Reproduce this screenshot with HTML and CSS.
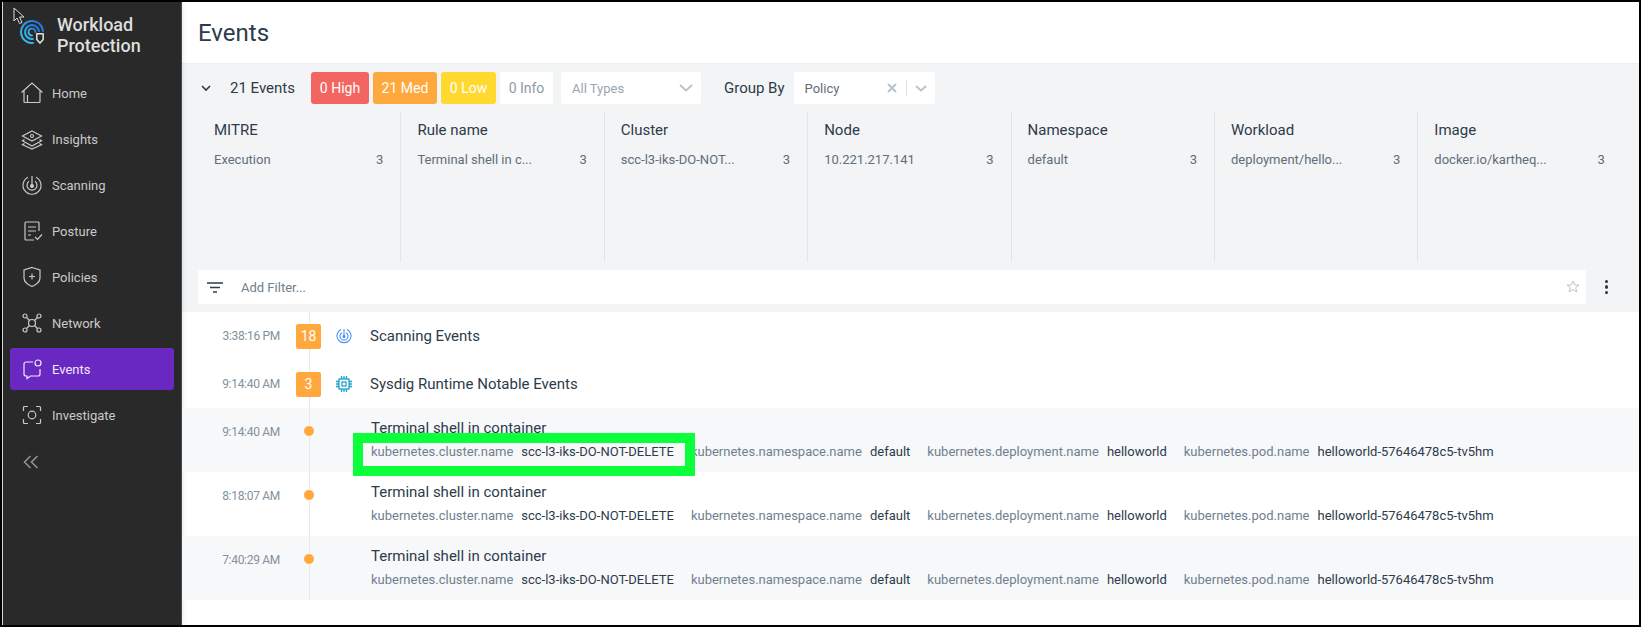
FILE: index.html
```html
<!DOCTYPE html>
<html lang="en">

<head>
    <meta charset="UTF-8">
    <meta name="viewport" content="width=device-width, initial-scale=1.0">
    <title>Events</title>
    <link rel="stylesheet" href="styles.css">
</head>

<body>
<div class="window">

    <!-- mouse pointer caught in the screenshot -->
    <svg class="cursor" width="12" height="18" viewBox="0 0 12 18">
        <path d="M1 1v13l3-3 2.500 5.500 2.500-1-2.500-5.500h4.500z" fill="#222" stroke="#ddd" stroke-width="1"/>
    </svg>

    <aside class="sidebar">
        <div class="brand">
            <svg class="brand-logo" width="24" height="24" viewBox="0 0 24 24" fill="none" stroke-linecap="round">
                <defs>
                    <linearGradient id="logoBlue" x1="0" y1="1" x2="1" y2="0">
                        <stop offset="0" stop-color="#3cc4f4"/>
                        <stop offset="1" stop-color="#1c6fd6"/>
                    </linearGradient>
                </defs>
                <path d="M13 23A11 11 0 1 1 23 11" stroke="url(#logoBlue)" stroke-width="2"/>
                <path d="M13 19A7 7 0 1 1 19 11" stroke="url(#logoBlue)" stroke-width="2"/>
                <path d="M12 15.500A3.500 3.500 0 1 1 15.500 12" stroke="url(#logoBlue)" stroke-width="2"/>
                <path d="M16.800 13.800h6.400v5.700l-3.200 3.600-3.200-3.600z" fill="#292929" stroke="#e4e4e4" stroke-width="1.500" stroke-linejoin="round"/>
            </svg>
            <div class="brand-name">Workload<br>Protection</div>
        </div>

        <nav class="nav">
            <a class="nav-item">
                <svg class="nav-icon" viewBox="0 0 22 22"><path d="M0.500 10.500L11 1l10.500 9.500M3 8.500v11a1 1 0 0 0 1 1h14a1 1 0 0 0 1-1v-11M6.500 20v-7"/></svg>
                Home
            </a>
            <a class="nav-item">
                <svg class="nav-icon" viewBox="0 0 22 22"><path d="M11 3l9.500 5-9.500 5-9.500-5zM3.500 11.500l-2 1.200 9.500 5.300 9.500-5.300-2-1.200M3.500 15.500l-2 1.200 9.500 4.300 9.500-4.300-2-1.200"/><circle cx="11" cy="8" r="1.500"/></svg>
                Insights
            </a>
            <a class="nav-item">
                <svg class="nav-icon" viewBox="0 0 22 22"><path d="M7 3.200a9 9 0 1 0 8 0M8 7.200a5 5 0 1 0 6 0M11 2v10"/><circle cx="11" cy="12" r="1.400" fill="#c9c9c9"/></svg>
                Scanning
            </a>
            <a class="nav-item">
                <svg class="nav-icon" viewBox="0 0 22 22"><path d="M18 11V3a1 1 0 0 0-1-1H5a1 1 0 0 0-1 1v16a1 1 0 0 0 1 1h8M7 7h8M7 11h8M7 15h3M14 17l2.500 2.500 4.500-5"/></svg>
                Posture
            </a>
            <a class="nav-item">
                <svg class="nav-icon" viewBox="0 0 22 22"><path d="M11 1.500l8 2.500v8c0 4-3.500 6.500-8 8.500-4.500-2-8-4.500-8-8.500V4zM11 7.500v6M8 10.500h6"/></svg>
                Policies
            </a>
            <a class="nav-item">
                <svg class="nav-icon" viewBox="0 0 22 22"><circle cx="11" cy="11" r="3.500"/><circle cx="4" cy="4" r="2"/><circle cx="18" cy="4" r="2"/><circle cx="4" cy="18" r="2"/><circle cx="18" cy="18" r="2"/><path d="M5.500 5.500l3 3M16.500 5.500l-3 3M5.500 16.500l3-3M16.500 16.500l-3-3"/></svg>
                Network
            </a>
            <a class="nav-item active">
                <svg class="nav-icon" viewBox="0 0 22 22"><path d="M12 4H5a2 2 0 0 0-2 2v10a2 2 0 0 0 2 2h1v2.500l3.500-2.500H17a2 2 0 0 0 2-2v-5"/><circle cx="17" cy="5" r="3"/></svg>
                Events
            </a>
            <a class="nav-item">
                <svg class="nav-icon" viewBox="0 0 22 22"><path d="M7 2.500H3.500a1 1 0 0 0-1 1V7M15 2.500h3.500a1 1 0 0 1 1 1V7M7 19.500H3.500a1 1 0 0 1-1-1V15M15 19.500h3.500a1 1 0 0 0 1-1V15"/><circle cx="11" cy="11" r="3.800"/></svg>
                Investigate
            </a>
        </nav>

        <svg class="collapse" width="16" height="14" viewBox="0 0 16 14" fill="none" stroke="#8b929a" stroke-width="1.600">
            <path d="M7.500 1L1.500 7l6 6M14.500 1l-6 6 6 6"/>
        </svg>
    </aside>

    <main class="main">
        <header class="page-header">
            <h1>Events</h1>
        </header>

        <section class="summary">
            <div class="toolbar">
                <svg class="toggle" width="10" height="7" viewBox="0 0 10 7" fill="none" stroke="#2d3b4a" stroke-width="1.600"><path d="M1 1l4 4 4-4"/></svg>
                <span class="event-count">21 Events</span>
                <span class="sev sev-high">0 High</span>
                <span class="sev sev-med">21 Med</span>
                <span class="sev sev-low">0 Low</span>
                <span class="sev sev-info">0 Info</span>
                <div class="select select-types">
                    <span>All Types</span>
                    <svg width="14" height="8" viewBox="0 0 14 8" fill="none" stroke="#b8c2ca" stroke-width="1.800"><path d="M1 1l6 5.500L13 1"/></svg>
                </div>
                <span class="group-label">Group By</span>
                <div class="select select-group">
                    <span class="select-value">Policy</span>
                    <svg width="10" height="10" viewBox="0 0 10 10" fill="none" stroke="#b8c2ca" stroke-width="2"><path d="M1 1l8 8M9 1l-8 8"/></svg>
                    <i class="select-sep"></i>
                    <svg width="12" height="7" viewBox="0 0 12 7" fill="none" stroke="#b8c2ca" stroke-width="1.800"><path d="M1 1l5 4.500L11 1"/></svg>
                </div>
            </div>

            <div class="facets">
                <div class="facet">
                    <h3>MITRE</h3>
                    <div class="facet-row"><span>Execution</span><span>3</span></div>
                </div>
                <div class="facet">
                    <h3>Rule name</h3>
                    <div class="facet-row"><span>Terminal shell in c...</span><span>3</span></div>
                </div>
                <div class="facet">
                    <h3>Cluster</h3>
                    <div class="facet-row"><span>scc-l3-iks-DO-NOT...</span><span>3</span></div>
                </div>
                <div class="facet">
                    <h3>Node</h3>
                    <div class="facet-row"><span>10.221.217.141</span><span>3</span></div>
                </div>
                <div class="facet">
                    <h3>Namespace</h3>
                    <div class="facet-row"><span>default</span><span>3</span></div>
                </div>
                <div class="facet">
                    <h3>Workload</h3>
                    <div class="facet-row"><span>deployment/hello...</span><span>3</span></div>
                </div>
                <div class="facet">
                    <h3>Image</h3>
                    <div class="facet-row"><span>docker.io/kartheq...</span><span>3</span></div>
                </div>
            </div>

            <div class="filter-line">
                <div class="filter-bar">
                    <svg width="16" height="11" viewBox="0 0 16 11" stroke="#2d3b4a" stroke-width="1.500"><path d="M0 1h16M3 5.500h10M6 10h4"/></svg>
                    <span class="filter-text">Add Filter...</span>
                    <svg class="star" width="14" height="14" viewBox="0 0 14 14" fill="none" stroke="#bcc6cd" stroke-width="1"><path d="M7 1l1.800 4h4.200l-3.400 2.700 1.300 4.300L7 9.500 3.100 12l1.300-4.300L1 5h4.200z"/></svg>
                </div>
                <div class="kebab"><i></i><i></i><i></i></div>
            </div>
        </section>

        <section class="events">
            <div class="row group">
                <span class="time">3:38:16 PM</span>
                <div class="mark"><span class="count">18</span></div>
                <svg class="type-icon" width="16" height="16" viewBox="0 0 16 16" fill="none" stroke="#4b8ef0" stroke-width="1.100"><path d="M5 1.500a7 7 0 1 0 6 0M6 4.700a4 4 0 1 0 4 0M8 1v7"/><circle cx="8" cy="8.500" r="1" fill="#4b8ef0"/></svg>
                <span class="group-name">Scanning Events</span>
            </div>
            <div class="row group">
                <span class="time">9:14:40 AM</span>
                <div class="mark"><span class="count">3</span></div>
                <svg class="type-icon" width="16" height="16" viewBox="0 0 16 16" fill="none" stroke="#1ba3c6" stroke-width="1.300"><rect x="3" y="3" width="10" height="10"/><rect x="6" y="6" width="4" height="4"/><path d="M5.500 0v3M8 0v3M10.500 0v3M5.500 13v3M8 13v3M10.500 13v3M0 5.500h3M0 8h3M0 10.500h3M13 5.500h3M13 8h3M13 10.500h3"/></svg>
                <span class="group-name">Sysdig Runtime Notable Events</span>
            </div>

            <div class="row event alt">
                <span class="time">9:14:40 AM</span>
                <div class="mark"><span class="dot"></span></div>
                <div class="event-body">
                    <div class="event-name">Terminal shell in container</div>
                    <div class="labels">
                        <span><em>kubernetes.cluster.name</em>scc-l3-iks-DO-NOT-DELETE</span>
                        <span><em>kubernetes.namespace.name</em>default</span>
                        <span><em>kubernetes.deployment.name</em>helloworld</span>
                        <span><em>kubernetes.pod.name</em>helloworld-57646478c5-tv5hm</span>
                    </div>
                </div>
                <!-- green box drawn on the screenshot -->
                <div class="callout"></div>
            </div>
            <div class="row event">
                <span class="time">8:18:07 AM</span>
                <div class="mark"><span class="dot"></span></div>
                <div class="event-body">
                    <div class="event-name">Terminal shell in container</div>
                    <div class="labels">
                        <span><em>kubernetes.cluster.name</em>scc-l3-iks-DO-NOT-DELETE</span>
                        <span><em>kubernetes.namespace.name</em>default</span>
                        <span><em>kubernetes.deployment.name</em>helloworld</span>
                        <span><em>kubernetes.pod.name</em>helloworld-57646478c5-tv5hm</span>
                    </div>
                </div>
            </div>
            <div class="row event alt">
                <span class="time">7:40:29 AM</span>
                <div class="mark"><span class="dot"></span></div>
                <div class="event-body">
                    <div class="event-name">Terminal shell in container</div>
                    <div class="labels">
                        <span><em>kubernetes.cluster.name</em>scc-l3-iks-DO-NOT-DELETE</span>
                        <span><em>kubernetes.namespace.name</em>default</span>
                        <span><em>kubernetes.deployment.name</em>helloworld</span>
                        <span><em>kubernetes.pod.name</em>helloworld-57646478c5-tv5hm</span>
                    </div>
                </div>
            </div>
        </section>
    </main>
</div>
</body>
</html>
```

FILE: styles.css
```css
* {
    box-sizing: border-box;
}

html, body {
    margin: 0;
    padding: 0;
    background: #000;
}

body {
    font-family: 'Roboto', sans-serif;
    color: #2d3b4a;
}

.window {
    position: relative;
    display: flex;
    width: 1641px;
    height: 627px;
    border: 2px solid #000;
    background: #fff;
    overflow: hidden;
}

.cursor {
    position: absolute;
    left: 11px;
    top: 5px;
    z-index: 5;
}

/* sidebar */
.sidebar {
    position: relative;
    flex: 0 0 180px;
    background: #292929;
    border-left: 1px solid #d8d8d8;
    border-right: 1px solid #414a52;
    box-shadow: 0 0 6px rgba(0, 0, 0, 0.12);
}

.brand {
    display: flex;
    height: 67px;
    padding: 12px 0 0 17px;
}

.brand-logo {
    flex: none;
    margin-top: 6px;
}

.brand-name {
    margin-left: 13px;
    font-size: 18px;
    font-weight: 500;
    line-height: 21px;
    color: #dedede;
}

.nav {
    display: flex;
    flex-direction: column;
    gap: 4px;
    padding: 3px 7px 0 7px;
}

.nav-item {
    display: flex;
    align-items: center;
    height: 42px;
    padding-left: 11px;
    border-radius: 3px;
    font-size: 13px;
    color: #c9c9c9;
}

.nav-item.active {
    background: #6a28c2;
    color: #f0eaf8;
}

.nav-icon {
    flex: none;
    width: 22px;
    height: 22px;
    margin-right: 9px;
    fill: none;
    stroke: #c9c9c9;
    stroke-width: 1.200;
}

.active .nav-icon {
    stroke: #f0eaf8;
}

.collapse {
    display: block;
    margin: 19px 0 0 20px;
}

/* main area */
.main {
    flex: 1;
    min-width: 0;
}

.page-header {
    display: flex;
    align-items: center;
    height: 61px;
    padding-left: 16px;
}

h1 {
    margin: 0;
    font-size: 24px;
    font-weight: 400;
}

.summary {
    height: 249px;
    padding: 8px 16px 0 16px;
    background: #f3f4f6;
    border-top: 1px solid #eceef0;
}

.toolbar {
    display: flex;
    align-items: center;
    height: 32px;
}

.toggle {
    margin-left: 3px;
}

.event-count {
    width: 81px;
    margin-left: 19px;
    margin-bottom: 1px;
    font-size: 15px;
}

.sev {
    display: flex;
    align-items: center;
    justify-content: center;
    height: 32px;
    margin-right: 4px;
    border-radius: 3px;
    font-size: 14px;
    color: #fff;
}

.sev-high {
    width: 58px;
    background: #f26561;
}

.sev-med {
    width: 64px;
    background: #ffa83e;
}

.sev-low {
    width: 55px;
    background: #ffd92f;
}

.sev-info {
    width: 53px;
    margin-right: 8px;
    background: #fff;
    color: #8d9aa4;
}

.select {
    display: flex;
    align-items: center;
    height: 32px;
    padding: 0 8px 0 11px;
    border-radius: 3px;
    background: #fff;
    font-size: 13px;
}

.select-types {
    justify-content: space-between;
    width: 140px;
    color: #9aa5ae;
}

.group-label {
    margin: 0 9px 0 23px;
    font-size: 15px;
}

.select-group {
    width: 141px;
    color: #5f6e7a;
}

.select-value {
    flex: 1;
}

.select-sep {
    width: 1px;
    height: 16px;
    margin: 0 8px 0 9px;
    background: #dfe3e6;
}

.facets {
    display: grid;
    grid-template-columns: repeat(7, 203.400px);
    height: 150px;
    margin-top: 8px;
}

.facet {
    padding: 8px 17px 0 16px;
    border-right: 1px solid #e1e5e9;
}

.facet:last-child {
    border-right: 0;
}

.facet h3 {
    margin: 0;
    font-size: 15px;
    font-weight: 400;
    line-height: 20px;
}

.facet-row {
    display: flex;
    justify-content: space-between;
    margin-top: 10px;
    font-size: 13px;
    line-height: 20px;
    color: #5f6e7a;
}

.filter-line {
    display: flex;
    align-items: center;
    margin-top: 8px;
}

.filter-bar {
    display: flex;
    align-items: center;
    flex: 1;
    height: 34px;
    padding: 0 6px 0 9px;
    border-radius: 3px;
    background: #fff;
}

.filter-text {
    flex: 1;
    margin-left: 18px;
    font-size: 13px;
    color: #6f808c;
}

.kebab {
    display: flex;
    flex-direction: column;
    gap: 2px;
    width: 3px;
    margin: 0 15px 0 19px;
}

.kebab i {
    height: 3.500px;
    border-radius: 50%;
    background: #2d3b4a;
}

/* event list */
.row {
    position: relative;
    display: flex;
}

.row.group {
    align-items: center;
    height: 48px;
}

.row.event {
    height: 64px;
}

.row.alt {
    background: #f7f8fa;
}

.time {
    flex: none;
    width: 98px;
    font-size: 12px;
    letter-spacing: -0.300px;
    text-align: right;
    color: #84919b;
}

.event .time {
    margin-top: 14px;
    line-height: 20px;
    height: 20px;
}

.mark {
    position: relative;
    flex: none;
    align-self: stretch;
    display: flex;
    justify-content: center;
    align-items: center;
    width: 58px;
}

.mark::before {
    content: "";
    position: absolute;
    left: 28.500px;
    top: 0;
    bottom: 0;
    width: 1px;
    background: #e6e9ec;
}

.event .mark {
    align-items: flex-start;
    padding-top: 17px;
}

.count {
    position: relative;
    display: flex;
    align-items: center;
    justify-content: center;
    width: 25px;
    height: 25px;
    margin-left: -1px;
    border-radius: 2px;
    background: #ffa83e;
    font-size: 14px;
    color: #fff;
}

.dot {
    position: relative;
    width: 12px;
    height: 12px;
    border: 1px solid #fff;
    border-radius: 50%;
    background: #ffa83e;
}

.type-icon {
    flex: none;
    margin-left: -2px;
    margin-right: 18px;
}

.group-name {
    font-size: 15px;
}

.event-body {
    margin-left: 33px;
    padding-top: 8px;
}

.event-name {
    font-size: 15px;
    line-height: 24px;
}

.labels {
    display: flex;
    gap: 17px;
    font-size: 13px;
    line-height: 24px;
    white-space: nowrap;
}

.labels em {
    margin-right: 8px;
    font-style: normal;
    color: #708090;
}

.callout {
    position: absolute;
    left: 171px;
    top: 25px;
    width: 342px;
    height: 43px;
    border: 10px solid #0bff3a;
}
```
